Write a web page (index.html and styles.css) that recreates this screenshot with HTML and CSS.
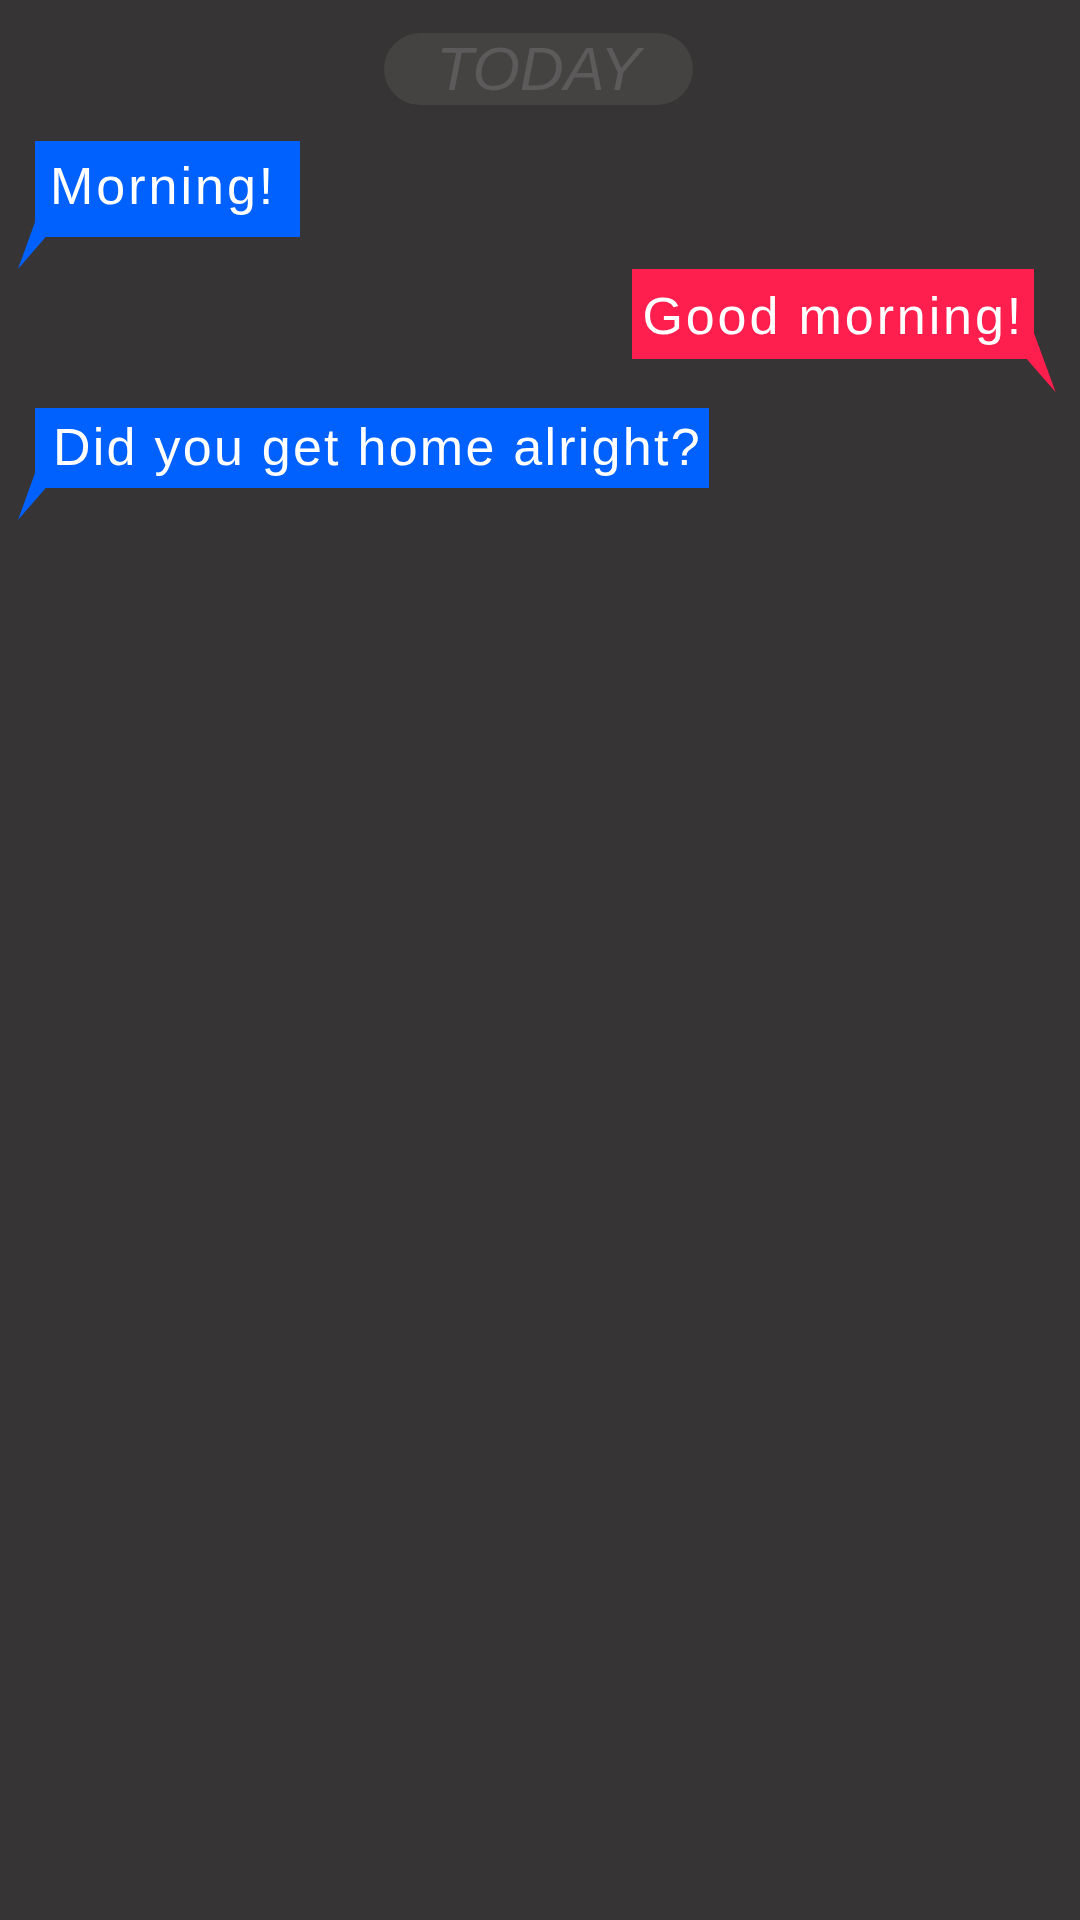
FILE: index.html
```html
<!DOCTYPE html>
<html lang="en">
<head>
<meta charset="utf-8">
<title>Chat</title>
<link rel="stylesheet" href="styles.css">
</head>
<body>
<main class="chat">
  <div class="day"><span class="day-label">TODAY</span></div>
  <div class="bubble bubble-in bubble-morning">Morning!</div>
  <div class="bubble bubble-out bubble-good">Good morning!</div>
  <div class="bubble bubble-in bubble-home">Did you get home alright?</div>
</main>
</body>
</html>
```

FILE: styles.css
```css
html, body {
  margin: 0;
  padding: 0;
  background: #363435;
}
body {
  width: 1080px;
  height: 1920px;
  font-family: "Liberation Sans", Arial, sans-serif;
}
.chat {
  display: flex;
  flex-direction: column;
  align-items: flex-start;
  padding: 33px 46px 0 35px;
}
.day {
  align-self: center;
  box-sizing: border-box;
  width: 309px;
  height: 72px;
  margin-left: 8px;
  border-radius: 36px;
  background: #454342;
  display: flex;
  justify-content: center;
  padding-top: 6px;
}
.day-label {
  font-size: 61px;
  line-height: 61px;
  font-style: italic;
  color: #5c5a5a;
}
.bubble {
  position: relative;
  color: #ffffff;
  font-size: 52px;
  line-height: 52px;
  white-space: nowrap;
}
.bubble::after {
  content: "";
  position: absolute;
  background: inherit;
}
.bubble-in {
  background: #0061fe;
}
.bubble-in::after {
  left: -17px;
  bottom: -32px;
  width: 28px;
  height: 47px;
  clip-path: polygon(17px 0, 27.7px 15px, 0 47px);
}
.bubble-out {
  align-self: flex-end;
  background: #ff1f4f;
}
.bubble-out::after {
  right: -21.7px;
  bottom: -33.3px;
  width: 29px;
  height: 59.3px;
  clip-path: polygon(7.3px 0, 0 26px, 29px 59.3px);
}
.bubble-morning {
  margin-top: 36px;
  padding: 19px 23.7px 25px 15px;
  letter-spacing: 3px;
}
.bubble-good {
  margin-top: 32px;
  padding: 21px 9.9px 17px 10.5px;
  letter-spacing: 2.9px;
}
.bubble-home {
  margin-top: 49px;
  padding: 13px 7px 15px 18px;
  letter-spacing: 2.25px;
}
```
